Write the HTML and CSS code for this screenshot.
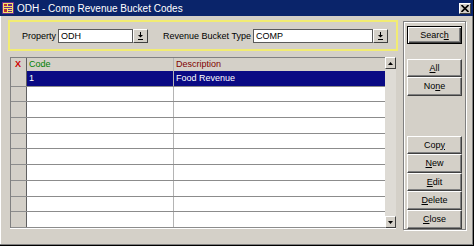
FILE: index.html
```html
<!DOCTYPE html>
<html lang="en">
<head>
    <meta charset="UTF-8">
    <meta name="viewport" content="width=device-width, initial-scale=1.0">
    <title>ODH - Comp Revenue Bucket Codes</title>
    <link rel="stylesheet" href="styles.css">
</head>
<body>
    <div class="window">

        <div class="titlebar">
            <svg class="app-icon" width="12" height="12" viewBox="0 0 12 12">
                <rect x="0.5" y="0.5" width="11" height="11" fill="#f4e26a" stroke="#6a2a8a"/>
                <rect x="2" y="2" width="3" height="2" fill="#c03030"/>
                <rect x="6" y="2" width="4" height="2" fill="#6a2a8a"/>
                <rect x="2" y="5" width="8" height="1" fill="#6a2a8a"/>
                <rect x="2" y="7" width="3" height="3" fill="#c03030"/>
                <rect x="6" y="7" width="4" height="1" fill="#6a2a8a"/>
                <rect x="6" y="9" width="4" height="1" fill="#6a2a8a"/>
            </svg>
            <span class="title">ODH - Comp Revenue Bucket Codes</span>
            <span class="close-btn">
                <svg width="8" height="7" viewBox="0 0 8 7">
                    <path d="M0.5 0 L7.5 7 M7.5 0 L0.5 7" stroke="#000" stroke-width="1.6"/>
                </svg>
            </span>
        </div>

        <div class="content">
            <div class="main">

                <div class="search-panel">
                    <span class="field-label label-property">Property</span>
                    <div class="combo combo-property">
                        <span class="combo-text">ODH</span>
                        <span class="combo-btn">
                            <svg width="7" height="8" viewBox="0 0 7 8">
                                <rect x="3" y="0" width="1" height="3" fill="#000"/>
                                <polygon points="1,3 6,3 3.5,5.5" fill="#000"/>
                                <rect x="1" y="7" width="5" height="1" fill="#000"/>
                            </svg>
                        </span>
                    </div>
                    <span class="field-label label-type">Revenue Bucket Type</span>
                    <div class="combo combo-type">
                        <span class="combo-text">COMP</span>
                        <span class="combo-btn">
                            <svg width="7" height="8" viewBox="0 0 7 8">
                                <rect x="3" y="0" width="1" height="3" fill="#000"/>
                                <polygon points="1,3 6,3 3.5,5.5" fill="#000"/>
                                <rect x="1" y="7" width="5" height="1" fill="#000"/>
                            </svg>
                        </span>
                    </div>
                </div>

                <div class="grid">
                    <div class="grid-body">
                        <div class="row header">
                            <div class="cell mark hdr-x">X</div>
                            <div class="cell code hdr-code">Code</div>
                            <div class="cell desc hdr-desc">Description</div>
                        </div>
                        <div class="row selected">
                            <div class="cell mark"></div>
                            <div class="cell code">1</div>
                            <div class="cell desc">Food Revenue</div>
                        </div>
                        <div class="row"><div class="cell mark"></div><div class="cell code"></div><div class="cell desc"></div></div>
                        <div class="row"><div class="cell mark"></div><div class="cell code"></div><div class="cell desc"></div></div>
                        <div class="row"><div class="cell mark"></div><div class="cell code"></div><div class="cell desc"></div></div>
                        <div class="row"><div class="cell mark"></div><div class="cell code"></div><div class="cell desc"></div></div>
                        <div class="row"><div class="cell mark"></div><div class="cell code"></div><div class="cell desc"></div></div>
                        <div class="row"><div class="cell mark"></div><div class="cell code"></div><div class="cell desc"></div></div>
                        <div class="row"><div class="cell mark"></div><div class="cell code"></div><div class="cell desc"></div></div>
                        <div class="row"><div class="cell mark"></div><div class="cell code"></div><div class="cell desc"></div></div>
                        <div class="row"><div class="cell mark"></div><div class="cell code"></div><div class="cell desc"></div></div>
                    </div>
                    <div class="scrollbar">
                        <div class="sb-btn">
                            <svg width="5" height="3" viewBox="0 0 5 3"><polygon points="2.5,0 5,3 0,3" fill="#000"/></svg>
                        </div>
                        <div class="sb-track"></div>
                        <div class="sb-btn">
                            <svg width="5" height="3" viewBox="0 0 5 3"><polygon points="0,0 5,0 2.5,3" fill="#000"/></svg>
                        </div>
                    </div>
                </div>

            </div>

            <div class="side">
                <div class="btn btn-default">Searc<u>h</u></div>

                <div class="btn btn-all"><u>A</u>ll</div>
                <div class="btn">No<u>n</u>e</div>

                <div class="btn btn-copy">Cop<u>y</u></div>
                <div class="btn"><u>N</u>ew</div>
                <div class="btn"><u>E</u>dit</div>
                <div class="btn"><u>D</u>elete</div>
                <div class="btn"><u>C</u>lose</div>
            </div>
        </div>

    </div>
</body>
</html>
```

FILE: styles.css
```css
body {
    margin: 0;
    font-family: "Liberation Sans", Arial, sans-serif;
    font-size: 9px;
    color: #000;
    background: #d4d0c8;
}

.window {
    width: 474px;
    height: 246px;
    box-sizing: border-box;
    background: #d4d0c8;
    border-right: 1px solid #000;
    border-bottom: 1px solid #000;
    box-shadow: inset -1px -1px 0 #808080, inset 1px 0 0 #ffffff;
}

/* title bar */
.titlebar {
    height: 16px;
    background: #0a246a;
    display: flex;
    align-items: center;
    padding-left: 2px;
}
.app-icon { flex: none; }
.title {
    color: #fff;
    font-size: 10px;
    margin-left: 3px;
    flex: 1;
    white-space: nowrap;
}
.close-btn {
    width: 12px;
    height: 11px;
    box-sizing: border-box;
    background: #d4d0c8;
    border-top: 1px solid #fff;
    border-left: 1px solid #fff;
    border-right: 1px solid #404040;
    border-bottom: 1px solid #404040;
    display: flex;
    align-items: center;
    justify-content: center;
    margin-right: 2px;
}

/* layout */
.content {
    display: flex;
    padding: 4px 0 0 8px;
}
.main { width: 390px; }

/* search panel */
.search-panel {
    height: 31px;
    box-sizing: border-box;
    border: 2px solid #f2ec72;
    display: flex;
    align-items: center;
    padding-left: 12px;
}
.field-label { white-space: nowrap; }
.label-property { width: 36px; }
.label-type { width: 90px; margin-left: 15px; }

.combo {
    height: 14px;
    display: flex;
}
.combo-property { width: 90px; }
.combo-type { width: 135px; }
.combo-text {
    flex: 1;
    background: #fff;
    border: 1px solid #5a5a5a;
    padding-left: 2px;
    line-height: 12px;
}
.combo-btn {
    width: 15px;
    box-sizing: border-box;
    background: #d4d0c8;
    border-top: 1px solid #fff;
    border-left: 1px solid #fff;
    border-right: 1px solid #404040;
    border-bottom: 1px solid #404040;
    display: flex;
    align-items: center;
    justify-content: center;
}

/* grid */
.grid {
    margin: 6px 0 0 2px;
    width: 386px;
    height: 172px;
    display: flex;
    border-bottom: 1px solid #fff;
    box-sizing: border-box;
}
.grid-body {
    flex: 1;
    border-left: 1px solid #808080;
    border-top: 1px solid #808080;
    background: #fff;
}
.row {
    display: flex;
    height: 15.7px;
    box-sizing: border-box;
    border-bottom: 1px solid #8c8c8c;
}
.row.header {
    height: 13px;
    border-bottom: none;
    background: #d4d0c8;
}
.cell {
    box-sizing: border-box;
    white-space: nowrap;
    padding-left: 2px;
    line-height: 14px;
}
.header .cell { line-height: 13px; }
.mark {
    width: 16px;
    background: #d4d0c8;
    border-right: 1px solid #606060;
}
.code {
    width: 147px;
    border-right: 1px solid #b4b4b4;
}
.desc { flex: 1; }

.hdr-x {
    color: #d00000;
    font-weight: bold;
    padding-left: 4px;
}
.hdr-code { color: #008000; }
.hdr-desc { color: #800000; }

.row.selected .code,
.row.selected .desc {
    background: #0a0a84;
    color: #fff;
}

/* scrollbar */
.scrollbar {
    width: 11px;
    display: flex;
    flex-direction: column;
    background: #dedbd5;
}
.sb-btn {
    height: 12px;
    box-sizing: border-box;
    background: #d4d0c8;
    border-top: 1px solid #fff;
    border-left: 1px solid #fff;
    border-right: 1px solid #404040;
    border-bottom: 1px solid #404040;
    display: flex;
    align-items: center;
    justify-content: center;
}
.sb-track { flex: 1; }

/* right side buttons */
.side {
    width: 63px;
    height: 209px;
    box-sizing: border-box;
    margin: 1px 0 0 5px;
    border: 1px solid #808080;
    box-shadow: 1px 1px 0 #fff, inset 1px 1px 0 #fff;
    padding: 4px 0 0 3px;
}
.btn {
    width: 55px;
    height: 18.6px;
    box-sizing: border-box;
    background: #d4d0c8;
    border-top: 1px solid #fff;
    border-left: 1px solid #fff;
    border-right: 1px solid #404040;
    border-bottom: 1px solid #404040;
    box-shadow: inset -1px -1px 0 #808080;
    text-align: center;
    line-height: 16px;
}
.btn-default {
    height: 18px;
    border: 1px solid #000;
    box-shadow: inset 1px 1px 0 #fff, inset -1px -1px 0 #404040, inset -2px -2px 0 #808080;
}
.btn-all { margin-top: 15px; height: 18px; }
.btn-copy { margin-top: 40px; }
```
